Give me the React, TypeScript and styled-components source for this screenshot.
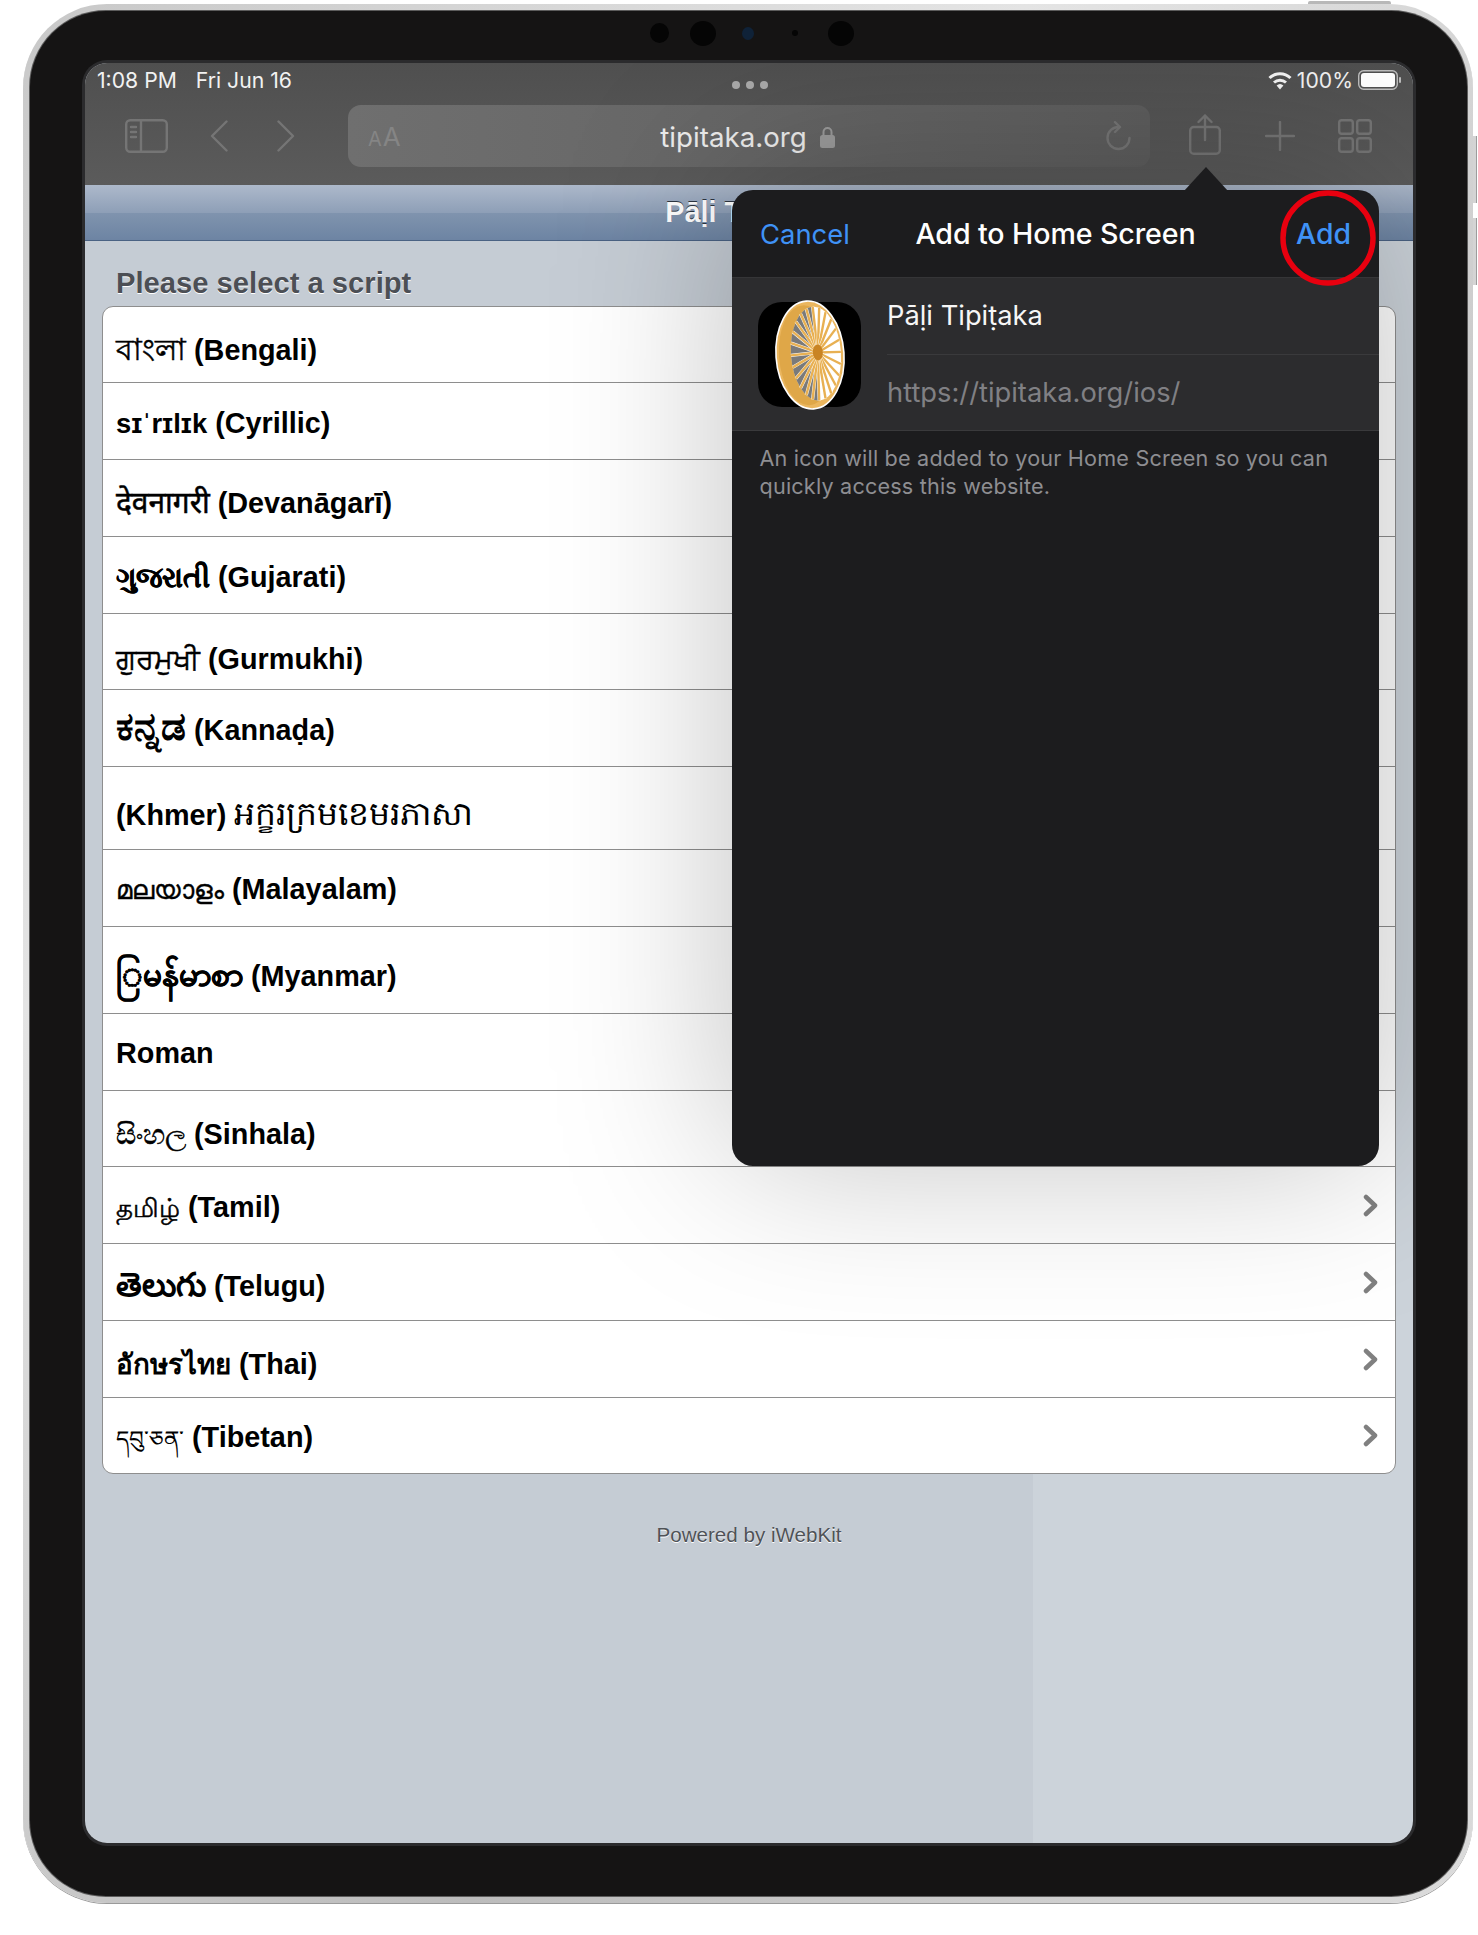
import React from "react";
import styled, { createGlobalStyle } from "styled-components";

const Global = createGlobalStyle`
  html, body { margin: 0; padding: 0; background: #fff; }
  #root { width: 1478px; height: 1935px; }
`;

const ui = `Inter, "Noto Sans", "Liberation Sans", sans-serif`;
const web = `"Liberation Sans", "Noto Sans", "DejaVu Sans", sans-serif`;

const Stage = styled.div`
  width: 1478px;
  height: 1935px;
  padding: 4px 5px 0 23px;
  box-sizing: border-box;
  background: #fff;
  overflow: hidden;
`;
const Rim = styled.div`
  position: relative;
  width: 1450px;
  height: 1899px;
  box-sizing: border-box;
  padding: 7px 6px 7px 7px;
  border-radius: 84px;
  background: linear-gradient(135deg, #c8c8c8, #e4e4e4 30%, #bcbcbc 70%, #dcdcdc);
  box-shadow: 0 1px 0 #9a9a9a;
`;
const SideButton = styled.div<{ $top: number; $h: number }>`
  position: absolute;
  right: -4px;
  top: ${(p) => p.$top}px;
  width: 3px;
  height: ${(p) => p.$h}px;
  background: #d4d4d4;
  border-right: 1px solid #9c9c9c;
`;
const TopButton = styled.div`
  position: absolute;
  top: -3px;
  left: 1285px;
  width: 83px;
  height: 3px;
  background: #b8b8b8;
  border-radius: 2px 2px 0 0;
`;
const Bezel = styled.div`
  height: 100%;
  box-sizing: border-box;
  padding: 0 54px 53px 55px;
  border-radius: 76px;
  background: #151414;
  box-shadow: 0 0 0 1px #5c5c5c;
  display: flex;
  flex-direction: column;
`;
const CameraRow = styled.div`
  height: 52px;
  flex: none;
  box-sizing: border-box;
  padding: 0 0 8px 6px;
  display: flex;
  align-items: center;
  justify-content: center;
`;
const Lens = styled.div<{ $w: number; $h: number; $ml: number; $c?: string }>`
  width: ${(p) => p.$w}px;
  height: ${(p) => p.$h}px;
  margin-left: ${(p) => p.$ml}px;
  border-radius: 50%;
  background: ${(p) => p.$c || "#050505"};
  flex: none;
`;
const Screen = styled.div`
  position: relative;
  flex: 1;
  min-height: 0;
  border-radius: 22px;
  overflow: hidden;
  background: linear-gradient(90deg, #c5ccd4 0 948px, #ccd3da 948px);
  box-shadow: 0 0 0 3px #2b2b2d;
  display: flex;
  flex-direction: column;
`;
const Chrome = styled.div`
  flex: none;
  height: 122px;
  background: linear-gradient(180deg, #4f4f4f, #5b5b5b);
  display: flex;
  flex-direction: column;
`;
const StatusBar = styled.div`
  height: 42px;
  flex: none;
  box-sizing: border-box;
  padding: 0 11px 8px 12px;
  display: grid;
  grid-template-columns: 1fr auto 1fr;
  align-items: center;
  color: #f2f2f2;
  font: 400 21.2px ${ui};
`;
const StatusLeft = styled.div`
  display: flex;
  gap: 19px;
`;
const Dots = styled.div`
  display: flex;
  gap: 6px;
  padding-top: 10px;
`;
const Dot = styled.span`
  width: 8px;
  height: 8px;
  border-radius: 50%;
  background: #a9a9a9;
`;
const StatusRight = styled.div`
  display: flex;
  justify-content: flex-end;
  align-items: center;
  gap: 5px;
`;
const NavRow = styled.div`
  height: 62px;
  flex: none;
  display: flex;
  align-items: center;
  padding-left: 40px;
`;
const NavIcon = styled.svg<{ $ml: number }>`
  flex: none;
  margin-left: ${(p) => p.$ml}px;
  fill: none;
  stroke: #757575;
  stroke-width: 2.4;
  stroke-linecap: round;
  stroke-linejoin: round;
`;
const ShareIcon = styled(NavIcon)`
  margin-top: -3px;
`;
const UrlPill = styled.div`
  margin-left: 53px;
  width: 802px;
  height: 62px;
  flex: none;
  box-sizing: border-box;
  padding: 0 19px 0 20px;
  border-radius: 13px;
  background: linear-gradient(90deg, #6f6f6f, #666 50%, #5d5d5d);
  display: grid;
  grid-template-columns: 1fr auto 1fr;
  align-items: center;
`;
const AaLabel = styled.div`
  color: #858585;
  font: 400 26px ${ui};
  display: flex;
  align-items: baseline;
  gap: 1px;
`;
const SmallA = styled.span`
  font-size: 20px;
`;
const UrlCenter = styled.div`
  display: flex;
  align-items: center;
  gap: 13px;
  padding: 2px 4px 0 0;
  color: #ececec;
  font: 400 27.7px ${ui};
`;
const ReloadSlot = styled.div`
  display: flex;
  justify-content: flex-end;
`;
const TitleBar = styled.div`
  flex: none;
  height: 55px;
  border-bottom: 1px solid #4a6283;
  background: linear-gradient(180deg, #adb9cb 0, #8e9fb7 50%, #8094ae 50%, #6d84a3 100%);
  display: flex;
  align-items: center;
  justify-content: center;
  color: #fff;
  font: 700 28.8px ${web};
  text-shadow: 0 -1px 0 #2d3642;
`;
const Content = styled.div`
  flex: 1;
  min-height: 0;
  box-sizing: border-box;
  padding: 23px 17px 0;
  display: flex;
  flex-direction: column;
`;
const SectionHead = styled.h2`
  margin: 0;
  height: 42px;
  padding-left: 14px;
  font: 700 29.2px/38px ${web};
  color: #4c4f55;
  text-shadow: 0 1px 0 #fff;
`;
const List = styled.div`
  border: 1px solid #8e8e8e;
  border-radius: 11px;
  background: #fff;
  overflow: hidden;
`;
const Row = styled.div<{ $h: number }>`
  height: ${(p) => p.$h}px;
  box-sizing: border-box;
  padding: 0 17px 0 13px;
  display: flex;
  align-items: center;
  justify-content: space-between;
  border-bottom: 1px solid #8e8e8e;
  color: #000;
  font: 700 28.8px/34px ${web};
  &:last-child {
    border-bottom: 0;
  }
`;
const Label = styled.span<{ $drop: number }>`
  padding-top: ${(p) => p.$drop}px;
  white-space: pre;
`;
const Native = styled.span<{ $size: number; $weight: number; $stroke: number }>`
  font-size: ${(p) => p.$size}px;
  font-weight: ${(p) => p.$weight};
  -webkit-text-stroke: ${(p) => p.$stroke}px #000;
`;
const Chevron = styled.svg`
  flex: none;
  fill: none;
  stroke: #808080;
  stroke-width: 4.5;
  stroke-linecap: round;
  stroke-linejoin: round;
`;
const Footer = styled.p`
  margin: 49px 0 0;
  text-align: center;
  font: 400 20.6px ${web};
  color: #4f5257;
  text-shadow: 0 1px 0 #fff;
`;
const Popover = styled.div`
  position: absolute;
  left: 647px;
  top: 127px;
  width: 647px;
  height: 976px;
  border-radius: 21px;
  background: #1c1c1e;
  box-shadow: 0 -10px 175px rgba(0, 0, 0, 0.25);
  display: flex;
  flex-direction: column;
  font-family: ${ui};
  &::before {
    content: "";
    position: absolute;
    left: 452px;
    top: -23px;
    width: 44px;
    height: 24px;
    background: #1c1c1e;
    clip-path: polygon(50% 0, 100% 100%, 0 100%);
  }
`;
const PopHeader = styled.div`
  flex: none;
  height: 88px;
  box-sizing: border-box;
  padding: 0 28px;
  display: grid;
  grid-template-columns: 1fr auto 1fr;
  align-items: center;
  border-bottom: 1px solid #353537;
`;
const PopTitle = styled.div`
  color: #fff;
  font-size: 28.6px;
  font-weight: 500;
  letter-spacing: -0.1px;
`;
const PopAction = styled.div<{ $end?: boolean; $strong?: boolean }>`
  color: #3f92f6;
  font-size: ${(p) => (p.$strong ? 28.4 : 27.4)}px;
  font-weight: ${(p) => (p.$strong ? 500 : 400)};
  text-align: ${(p) => (p.$end ? "right" : "left")};
`;
const FormCard = styled.div`
  flex: none;
  height: 153px;
  box-sizing: border-box;
  padding-left: 26px;
  background: #2c2c2e;
  border-bottom: 1px solid #3a3a3c;
  display: flex;
  gap: 26px;
`;
const AppIcon = styled.div`
  flex: none;
  width: 103px;
  height: 105px;
  margin-top: 24px;
  border-radius: 24px;
  background: #000;
  display: flex;
  justify-content: center;
  align-items: center;
`;
const Fields = styled.div`
  flex: 1;
  display: flex;
  flex-direction: column;
`;
const Field = styled.div<{ $muted?: boolean }>`
  flex: 1;
  box-sizing: border-box;
  display: flex;
  align-items: center;
  color: ${(p) => (p.$muted ? "#808084" : "#f6f6f6")};
  font-size: 27.3px;
  border-bottom: ${(p) => (p.$muted ? "0" : "1px solid #3a3a3c")};
`;
const Hint = styled.p`
  margin: 13px 30px 0 27.5px;
  color: #8e8e92;
  font-size: 21.6px;
  line-height: 28px;
  letter-spacing: 0.2px;
`;
const RedCircle = styled.svg`
  position: absolute;
  left: 547px;
  top: -1px;
  fill: none;
  stroke: #e8000f;
  stroke-width: 5.5;
  pointer-events: none;
`;

type Item = {
  native?: string;
  latin: string;
  h: number;
  drop: number;
  size?: number;
  weight?: number;
  stroke?: number;
  latinFirst?: boolean;
};

const rows: Item[] = [
  { native: "বাংলা", latin: "(Bengali)", h: 76, drop: 10, size: 30, weight: 400, stroke: 0.5 },
  { native: "sɪˈrɪlɪk", latin: "(Cyrillic)", h: 77, drop: 4, size: 27.4, weight: 700 },
  { native: "देवनागरी", latin: "(Devanāgarī)", h: 77, drop: 9, size: 29.9, weight: 400, stroke: 0.5 },
  { native: "ગુજરાતી", latin: "(Gujarati)", h: 77, drop: 5, size: 27.8, weight: 700, stroke: 0.3 },
  { native: "ਗੁਰਮੁਖੀ", latin: "(Gurmukhi)", h: 76, drop: 14, size: 28.5, weight: 400, stroke: 0.5 },
  { native: "ಕನ್ನಡ", latin: "(Kannaḍa)", h: 77, drop: 0, size: 39, weight: 700 },
  { native: "អក្ខរក្រមខេមរភាសា", latin: "(Khmer)", h: 83, drop: 13, size: 33, weight: 400, latinFirst: true },
  { native: "മലയാളം", latin: "(Malayalam)", h: 77, drop: 3, size: 25.5, weight: 400, stroke: 0.4 },
  { native: "\u103Cမန်မာစာ", latin: "(Myanmar)", h: 87, drop: 11, size: 33.2, weight: 700, stroke: 0.6 },
  { latin: "Roman", h: 77, drop: 2 },
  { native: "සිංහල", latin: "(Sinhala)", h: 76, drop: 12, size: 28, weight: 400, stroke: 0.5 },
  { native: "தமிழ்", latin: "(Tamil)", h: 77, drop: 4, size: 26, weight: 400, stroke: 0.5 },
  { native: "తెలుగు", latin: "(Telugu)", h: 77, drop: 7, size: 33, weight: 700 },
  { native: "อักษรไทย", latin: "(Thai)", h: 77, drop: 11, size: 27.8, weight: 700 },
  { native: "དབུ་ཅན་", latin: "(Tibetan)", h: 75, drop: 4, size: 23, weight: 400 },
];

function Wheel() {
  const hub = { x: 43, y: 53 };
  const spokes = Array.from({ length: 24 }, (_, i) => {
    const a = (i / 24) * Math.PI * 2;
    return { x: 41 + 25 * Math.cos(a), y: 54 + 47 * Math.sin(a) };
  });
  return (
    <svg width="70" height="110" viewBox="0 0 70 110" overflow="visible">
      <g transform="rotate(-4 35 55)">
        <ellipse cx="35" cy="55" rx="34" ry="54" fill="#ebb65e" stroke="#fff" strokeWidth="1.6" />
        <ellipse cx="31" cy="55" rx="27" ry="50" fill="#dfa748" />
        <ellipse cx="41" cy="54" rx="25" ry="47" fill="#fff" />
        <path d="M41 7 A25 47 0 0 0 41 101 Z" fill="#222" opacity="0.6" />
        {spokes.map((s, i) => (
          <g key={i}>
            <line x1={hub.x} y1={hub.y} x2={s.x} y2={s.y} stroke="#fff" strokeWidth="3.2" />
            <line x1={hub.x} y1={hub.y} x2={s.x} y2={s.y} stroke="#e8b052" strokeWidth="2.4" />
          </g>
        ))}
        <ellipse cx={hub.x} cy={hub.y} rx="5" ry="8" fill="#c98423" />
      </g>
    </svg>
  );
}

export default function App() {
  return (
    <Stage>
      <Global />
      <Rim>
        <TopButton />
        <SideButton $top={132} $h={67} />
        <SideButton $top={214} $h={67} />
        <Bezel>
          <CameraRow>
            <Lens $w={19} $h={20} $ml={0} />
            <Lens $w={26} $h={25} $ml={21} />
            <Lens $w={12} $h={13} $ml={26} $c="#0f2238" />
            <Lens $w={6} $h={6} $ml={38} />
            <Lens $w={26} $h={25} $ml={30} />
          </CameraRow>
          <Screen>
            <Chrome>
              <StatusBar>
                <StatusLeft>
                  <span>1:08 PM</span>
                  <span>Fri Jun 16</span>
                </StatusLeft>
                <Dots>
                  <Dot />
                  <Dot />
                  <Dot />
                </Dots>
                <StatusRight>
                  <svg width="24" height="19" viewBox="0 0 24 19" fill="none" stroke="#f4f4f4" strokeWidth="3">
                    <path d="M1.5 7 A15 15 0 0 1 22.5 7" />
                    <path d="M6 11.5 A9 9 0 0 1 18 11.5" />
                    <path d="M12 18.5 L8.6 14.6 A5 5 0 0 1 15.4 14.6 Z" fill="#f4f4f4" stroke="none" />
                  </svg>
                  <span>100%</span>
                  <svg width="44" height="20" viewBox="0 0 44 20">
                    <rect x="0.7" y="0.7" width="38.6" height="18.6" rx="5" fill="none" stroke="#bdbdbd" strokeWidth="1.4" />
                    <rect x="3" y="3" width="34" height="14" rx="3" fill="#fff" />
                    <rect x="41" y="7" width="2" height="6" rx="1" fill="#bdbdbd" />
                  </svg>
                </StatusRight>
              </StatusBar>
              <NavRow>
                <NavIcon $ml={0} width="43" height="34" viewBox="0 0 43 34">
                  <rect x="1.2" y="1.2" width="40.6" height="31.6" rx="4" />
                  <path d="M16 1.2 V32.8" />
                  <path d="M6 8 H11 M6 13 H11 M6 18 H11" />
                </NavIcon>
                <NavIcon $ml={42} width="18" height="32" viewBox="0 0 18 32">
                  <path d="M16.5 1.5 L2 16 L16.5 30.5" />
                </NavIcon>
                <NavIcon $ml={49} width="18" height="32" viewBox="0 0 18 32">
                  <path d="M1.5 1.5 L16 16 L1.5 30.5" />
                </NavIcon>
                <UrlPill>
                  <AaLabel>
                    <SmallA>A</SmallA>A
                  </AaLabel>
                  <UrlCenter>
                    tipitaka.org
                    <svg width="15" height="22" viewBox="0 0 15 22">
                      <path d="M3.5 9 V6 a4 4 0 0 1 8 0 V9" fill="none" stroke="#9b9b9b" strokeWidth="2" />
                      <rect x="0" y="9" width="15" height="13" rx="2.5" fill="#9b9b9b" />
                    </svg>
                  </UrlCenter>
                  <ReloadSlot>
                    <NavIcon $ml={0} width="26" height="30" viewBox="0 0 26 30">
                      <path d="M14 6 A11 11 0 1 0 24.5 17" />
                      <path d="M10 1.2 L15 6 L10 11" />
                    </NavIcon>
                  </ReloadSlot>
                </UrlPill>
                <ShareIcon $ml={39} width="32" height="41" viewBox="0 0 32 41">
                  <rect x="1.2" y="13" width="29.6" height="26.8" rx="3.5" />
                  <path d="M16 26 V1.5 M9.5 8 L16 1.5 L22.5 8" />
                </ShareIcon>
                <NavIcon $ml={44} width="30" height="30" viewBox="0 0 30 30">
                  <path d="M15 1 V29 M1 15 H29" />
                </NavIcon>
                <NavIcon $ml={43} width="34" height="34" viewBox="0 0 34 34">
                  <rect x="1.2" y="1.2" width="13.6" height="13.6" rx="2.5" />
                  <rect x="19.2" y="1.2" width="13.6" height="13.6" rx="2.5" />
                  <rect x="1.2" y="19.2" width="13.6" height="13.6" rx="2.5" />
                  <rect x="19.2" y="19.2" width="13.6" height="13.6" rx="2.5" />
                </NavIcon>
              </NavRow>
            </Chrome>
            <TitleBar>Pāḷi Tipiṭaka</TitleBar>
            <Content>
              <SectionHead>Please select a script</SectionHead>
              <List>
                {rows.map((r) => {
                  const nat = r.native ? (
                    <Native $size={r.size || 28.8} $weight={r.weight || 700} $stroke={r.stroke || 0}>
                      {r.native}
                    </Native>
                  ) : null;
                  return (
                    <Row key={r.latin} $h={r.h}>
                      {r.latinFirst ? (
                        <Label $drop={r.drop}>{r.latin} {nat}</Label>
                      ) : (
                        <Label $drop={r.drop}>{nat}{nat ? " " : ""}{r.latin}</Label>
                      )}
                      <Chevron width="15" height="23" viewBox="0 0 15 23">
                        <path d="M3 3 L12 11.5 L3 20" />
                      </Chevron>
                    </Row>
                  );
                })}
              </List>
              <Footer>Powered by iWebKit</Footer>
            </Content>
            <Popover>
              <PopHeader>
                <PopAction>Cancel</PopAction>
                <PopTitle>Add to Home Screen</PopTitle>
                <PopAction $end $strong>Add</PopAction>
              </PopHeader>
              <FormCard>
                <AppIcon>
                  <Wheel />
                </AppIcon>
                <Fields>
                  <Field>Pāḷi Tipiṭaka</Field>
                  <Field $muted>https://tipitaka.org/ios/</Field>
                </Fields>
              </FormCard>
              <Hint>
                An icon will be added to your Home Screen so you can quickly access this website.
              </Hint>
              <RedCircle width="98" height="98" viewBox="0 0 98 98">
                <ellipse cx="49" cy="49" rx="45" ry="45" />
              </RedCircle>
            </Popover>
          </Screen>
        </Bezel>
      </Rim>
    </Stage>
  );
}
